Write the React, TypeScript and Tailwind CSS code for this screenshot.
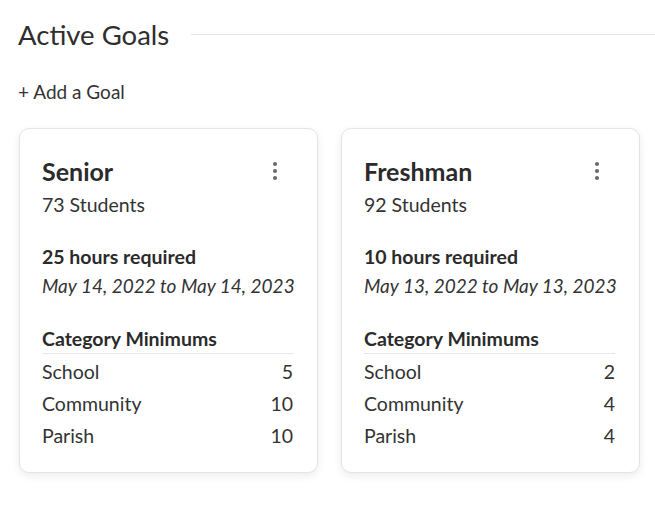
interface Goal {
  name: string
  students: number
  hours: number
  range: string
  minimums: { label: string; value: number }[]
}

const goals: Goal[] = [
  {
    name: "Senior",
    students: 73,
    hours: 25,
    range: "May 14, 2022 to May 14, 2023",
    minimums: [
      { label: "School", value: 5 },
      { label: "Community", value: 10 },
      { label: "Parish", value: 10 },
    ],
  },
  {
    name: "Freshman",
    students: 92,
    hours: 10,
    range: "May 13, 2022 to May 13, 2023",
    minimums: [
      { label: "School", value: 2 },
      { label: "Community", value: 4 },
      { label: "Parish", value: 4 },
    ],
  },
]

const Kebab = () => (
  <svg width="6" height="20" viewBox="0 0 6 20" className="mr-[15px] mt-[6px] text-[#6b6b6b]" fill="currentColor">
    <circle cx="3" cy="3" r="2.1" />
    <circle cx="3" cy="10" r="2.1" />
    <circle cx="3" cy="17" r="2.1" />
  </svg>
)

const GoalCard = ({ goal }: { goal: Goal }) => (
  <div className="w-[299px] rounded-[10px] border border-[#e4e4e4] bg-white pl-[22px] pr-[24px] pt-[26px] pb-[20px] shadow-[0_3px_8px_rgba(0,0,0,0.08)]">
    <div className="flex items-start justify-between">
      <h3 className="text-[25px] font-bold leading-[32px] text-[#2b2b2b]">{goal.name}</h3>
      <Kebab />
    </div>
    <p className="mt-[5px] text-[19.5px] leading-[26px] text-[#333]">{goal.students} Students</p>

    <p className="mt-[26px] text-[19.5px] font-bold leading-[26px] text-[#2b2b2b]">{goal.hours} hours required</p>
    <p className="mt-[3px] whitespace-nowrap text-[19px] italic leading-[26px] text-[#333]">{goal.range}</p>

    <p className="mt-[27px] border-b border-[#e6e6e6] pb-[1px] text-[19.5px] font-bold leading-[26px] text-[#2b2b2b]">
      Category Minimums
    </p>
    <div className="mt-[2px]">
      {goal.minimums.map((m) => (
        <div key={m.label} className="flex h-[32px] items-center justify-between text-[19.5px] text-[#333]">
          <span>{m.label}</span>
          <span>{m.value}</span>
        </div>
      ))}
    </div>
  </div>
)

export default function App() {
  return (
    <div className="h-[520px] w-[655px] overflow-hidden bg-white pl-[18px] pt-[16px] font-['Lato','Liberation_Sans',sans-serif]">
      <div className="flex items-start gap-[22px]">
        <h2 className="text-[27.5px] leading-[38px] text-[#2e2e2e]">Active Goals</h2>
        <div className="mt-[18px] h-px flex-1 bg-[#e4e4e4]" />
      </div>
      <button className="mt-[25px] text-[19px] leading-[26px] text-[#333]">+ Add a Goal</button>
      <div className="mt-[23px] flex gap-[23px] pl-px">
        {goals.map((g) => (
          <GoalCard key={g.name} goal={g} />
        ))}
      </div>
    </div>
  )
}
